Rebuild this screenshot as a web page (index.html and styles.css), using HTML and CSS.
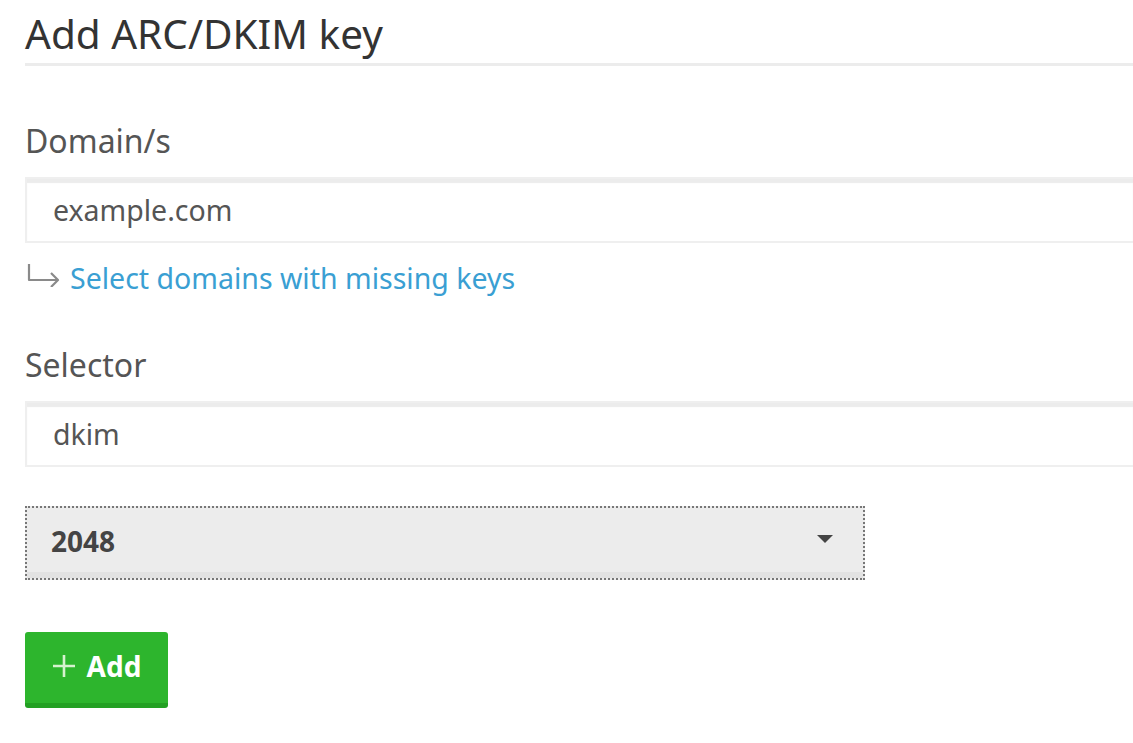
FILE: index.html
```html
<!DOCTYPE html>
<html>
<head>
<meta charset="utf-8">
<link rel="stylesheet" href="styles.css">
</head>
<body>
<div class="page">
  <h1 class="title">Add ARC/DKIM key</h1>
  <form class="form">
    <label class="label label-first">Domain/s</label>
    <div class="input">example.com</div>
    <div class="hint">
      <svg class="hint-arrow" width="36" height="24" viewBox="0 0 36 24">
        <path d="M3 1 V17 H32 M25 10 L32 17 L25 24" fill="none" stroke="#8a8a8a" stroke-width="2.2" stroke-linejoin="round"/>
      </svg>
      <a class="hint-link">Select domains with missing keys</a>
    </div>
    <label class="label label-second">Selector</label>
    <div class="input">dkim</div>
    <div class="select">
      <span class="select-value">2048</span>
      <span class="select-caret"></span>
    </div>
    <button class="btn-add" type="button">
      <svg class="plus" width="24" height="24" viewBox="0 0 24 24">
        <path d="M12 1 V23 M1 12 H23" stroke="#d6f2cf" stroke-width="2.6" fill="none"/>
      </svg>
      <span>Add</span>
    </button>
  </form>
</div>
</body>
</html>
```

FILE: styles.css
```css
html, body {
  margin: 0;
  padding: 0;
  background: #ffffff;
  overflow: hidden;
}

.page {
  box-sizing: border-box;
  width: 1133px;
  padding-left: 25px;
  font-family: "Noto Sans", "Open Sans", sans-serif;
}

.title {
  margin: 0;
  padding-top: 7px;
  padding-bottom: 2px;
  font-size: 40.5px;
  line-height: 54px;
  font-weight: 400;
  color: #333;
  border-bottom: 3px solid #ececec;
}

.form {
  display: flex;
  flex-direction: column;
  align-items: flex-start;
}

.label {
  display: block;
  margin-bottom: 16px;
  font-size: 32px;
  line-height: 40px;
  color: #555;
}

.label-first {
  margin-top: 55px;
}

.label-second {
  margin-top: 48px;
}

.input {
  box-sizing: border-box;
  width: 100%;
  height: 66px;
  padding: 0 26px;
  display: flex;
  align-items: center;
  font-size: 28.5px;
  color: #555;
  background: #fff;
  border: 2px solid #efefef;
  border-right: none;
  box-shadow: inset 0 4px 1px #ececec;
}

.hint {
  margin-top: 16px;
  display: flex;
  align-items: center;
  height: 38px;
}

.hint-arrow {
  margin-left: 1px;
  margin-right: 8px;
  margin-top: -6px;
}

.hint-link {
  font-size: 28.5px;
  line-height: 38px;
  color: #3a9fd3;
  cursor: pointer;
}

.select {
  box-sizing: border-box;
  margin-top: 39px;
  width: 840px;
  height: 74px;
  padding: 0 30px 4px 24px;
  display: flex;
  align-items: center;
  justify-content: space-between;
  background: #ececec;
  border: 2px dotted #777;
  box-shadow: inset 0 -6px 0 #e2e2e2;
}

.select-value {
  font-size: 28px;
  font-weight: 700;
  color: #444;
}

.select-caret {
  width: 0;
  height: 0;
  border-left: 8px solid transparent;
  border-right: 8px solid transparent;
  border-top: 8px solid #444;
  margin-top: -4px;
}

.btn-add {
  box-sizing: border-box;
  margin-top: 52px;
  width: 143px;
  height: 76px;
  padding: 0 0 4px 0;
  display: flex;
  align-items: center;
  justify-content: center;
  gap: 11px;
  font-family: "Noto Sans", "Open Sans", sans-serif;
  font-size: 28px;
  font-weight: 700;
  color: #fff;
  background: #2db52d;
  border: none;
  border-bottom: 5px solid #23a023;
  border-radius: 3px;
}

.plus {
  display: block;
}
```
